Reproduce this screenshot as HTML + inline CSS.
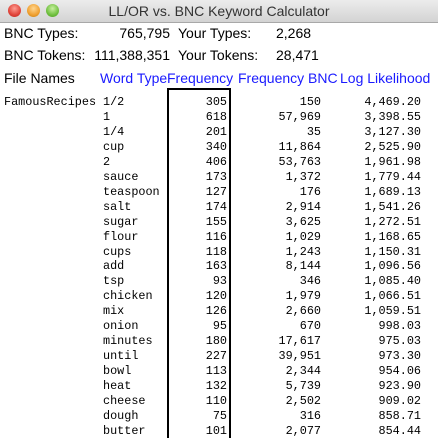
<!DOCTYPE html>
<html><head><style>
*{margin:0;padding:0}
html{width:438px;height:438px;overflow:hidden}
body{width:438px;height:438px;overflow:hidden;background:#fff;position:relative;font-family:"Liberation Sans",sans-serif}
.tb{position:absolute;left:0;top:0;width:438px;height:22px;background:linear-gradient(#ececec,#d3d3d3);border-bottom:1px solid #a8a8a8;text-align:center;font-size:14px;line-height:22px;color:#333}
.dot{position:absolute;top:4px;width:13px;height:13px;border-radius:50%}
.h{position:absolute;font-size:14px;color:#000;white-space:nowrap}
.b{color:#1a1aff}
.m{position:absolute;font-family:"Liberation Mono",monospace;font-size:11.8px;white-space:nowrap;line-height:14.95px}
.r{text-align:right}
.box{position:absolute;left:167px;top:88px;width:60px;height:350px;border:2px solid #000}
</style></head><body>
<div class="tb">LL/OR vs. BNC Keyword Calculator
<div class="dot" style="left:8px;background:radial-gradient(circle at 50% 35%,#ff9d92,#e0443a 60%,#b82a22)"></div>
<div class="dot" style="left:27px;background:radial-gradient(circle at 50% 35%,#ffd690,#f0a030 60%,#c07a10)"></div>
<div class="dot" style="left:46px;background:radial-gradient(circle at 50% 35%,#c8f0a0,#70c040 60%,#4a9a20)"></div>
</div>
<div class="h" style="left:4px;top:25px">BNC Types:</div>
<div class="h" style="left:110px;top:25px;width:60px;text-align:right">765,795</div>
<div class="h" style="left:178px;top:25px">Your Types:</div>
<div class="h" style="left:276px;top:25px">2,268</div>
<div class="h" style="left:4px;top:47px">BNC Tokens:</div>
<div class="h" style="left:80px;top:47px;width:90px;text-align:right">111,388,351</div>
<div class="h" style="left:178px;top:47px">Your Tokens:</div>
<div class="h" style="left:276px;top:47px">28,471</div>
<div class="h" style="left:4px;top:70px">File Names</div>
<div class="h b" style="left:100px;top:70px">Word Type</div>
<div class="h b" style="left:167px;top:70px">Frequency</div>
<div class="h b" style="left:238px;top:70px">Frequency BNC</div>
<div class="h b" style="left:340px;top:70px">Log Likelihood</div>
<div class="box"></div>
<div class="m" style="left:4px;top:95px">FamousRecipes</div>
<div class="m" style="left:103px;top:95px">1/2<br>1<br>1/4<br>cup<br>2<br>sauce<br>teaspoon<br>salt<br>sugar<br>flour<br>cups<br>add<br>tsp<br>chicken<br>mix<br>onion<br>minutes<br>until<br>bowl<br>heat<br>cheese<br>dough<br>butter</div>
<div class="m r" style="left:165px;top:95px;width:62px">305<br>618<br>201<br>340<br>406<br>173<br>127<br>174<br>155<br>116<br>118<br>163<br>93<br>120<br>126<br>95<br>180<br>227<br>113<br>132<br>110<br>75<br>101</div>
<div class="m r" style="left:230px;top:95px;width:91px">150<br>57,969<br>35<br>11,864<br>53,763<br>1,372<br>176<br>2,914<br>3,625<br>1,029<br>1,243<br>8,144<br>346<br>1,979<br>2,660<br>670<br>17,617<br>39,951<br>2,344<br>5,739<br>2,502<br>316<br>2,077</div>
<div class="m r" style="left:320px;top:95px;width:101px">4,469.20<br>3,398.55<br>3,127.30<br>2,525.90<br>1,961.98<br>1,779.44<br>1,689.13<br>1,541.26<br>1,272.51<br>1,168.65<br>1,150.31<br>1,096.56<br>1,085.40<br>1,066.51<br>1,059.51<br>998.03<br>975.03<br>973.30<br>954.06<br>923.90<br>909.02<br>858.71<br>854.44</div>
</body></html>
